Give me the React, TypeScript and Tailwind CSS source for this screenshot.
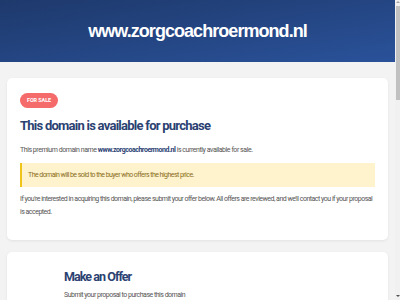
export default function App() {
  return (
    <div className="relative min-h-screen bg-[#f3f3f3] pr-[5px] font-['Roboto',sans-serif]">
      <header className="h-[62px] bg-gradient-to-br from-[#1e396c] to-[#2a529a] flex items-center justify-center">
        <h1 className="text-white text-[18px] font-bold tracking-[-0.95px] font-['Liberation_Sans',sans-serif]">
          www.zorgcoachroermond.nl
        </h1>
      </header>

      <main className="px-[7px] pt-4 pb-10 flex flex-col gap-3">
        <section className="bg-white rounded-[5px] shadow-[0_1px_3px_rgba(0,0,0,0.07)] px-[13px] pt-[15px] pb-[21px]">
          <div className="w-fit flex items-center h-[15px] px-[7px] rounded-full bg-[#f56b6b] text-white text-[5.5px] font-bold uppercase tracking-[-0.1px]">
            For Sale
          </div>
          <h2 className="mt-[10px] text-[13px] leading-4 font-bold tracking-[-0.75px] text-[#2b4272]">
            This domain is available for purchase
          </h2>
          <p className="mt-[10px] text-[7px] leading-3 tracking-[-0.45px] text-[#555]">
            This premium domain name{" "}
            <strong className="font-bold text-[#2b3f75]">www.zorgcoachroermond.nl</strong> is currently
            available for sale.
          </p>
          <div className="mt-[7px] h-[24px] flex items-center bg-[#fff3cd] border-l-2 border-[#f0c419] pl-[6px] text-[7px] tracking-[-0.55px] text-[#8a6d1d]">
            The domain will be sold to the buyer who offers the highest price.
          </div>
          <p className="mt-[6px] text-[7px] leading-[13px] tracking-[-0.5px] text-[#555]">
            If you're interested in acquiring this domain, please submit your offer below. All offers are
            reviewed, and we'll contact you if your proposal is accepted.
          </p>
        </section>

        <section className="bg-white rounded-[5px] shadow-[0_1px_3px_rgba(0,0,0,0.07)] pt-4 pb-10 px-[57px]">
          <h2 className="text-[12.5px] leading-[18px] font-bold tracking-[-0.95px] text-[#2b4272]">Make an Offer</h2>
          <p className="mt-[3px] text-[7px] leading-3 tracking-[-0.5px] text-[#555]">
            Submit your proposal to purchase this domain
          </p>
          <div className="h-40" />
        </section>
      </main>

      <div className="fixed right-0 top-0 h-screen w-[5px] bg-[#f1f1f1] flex flex-col items-center">
        <div className="mt-px w-0 h-0 border-x-[2px] border-x-transparent border-b-[2px] border-b-[#a3a3a3]" />
        <div className="mt-[3px] h-[94px] w-[4px] bg-[#c1c1c1]" />
        <div className="mt-auto mb-[3px] w-0 h-0 border-x-[2px] border-x-transparent border-t-[2px] border-t-[#505050]" />
      </div>
    </div>
  );
}
